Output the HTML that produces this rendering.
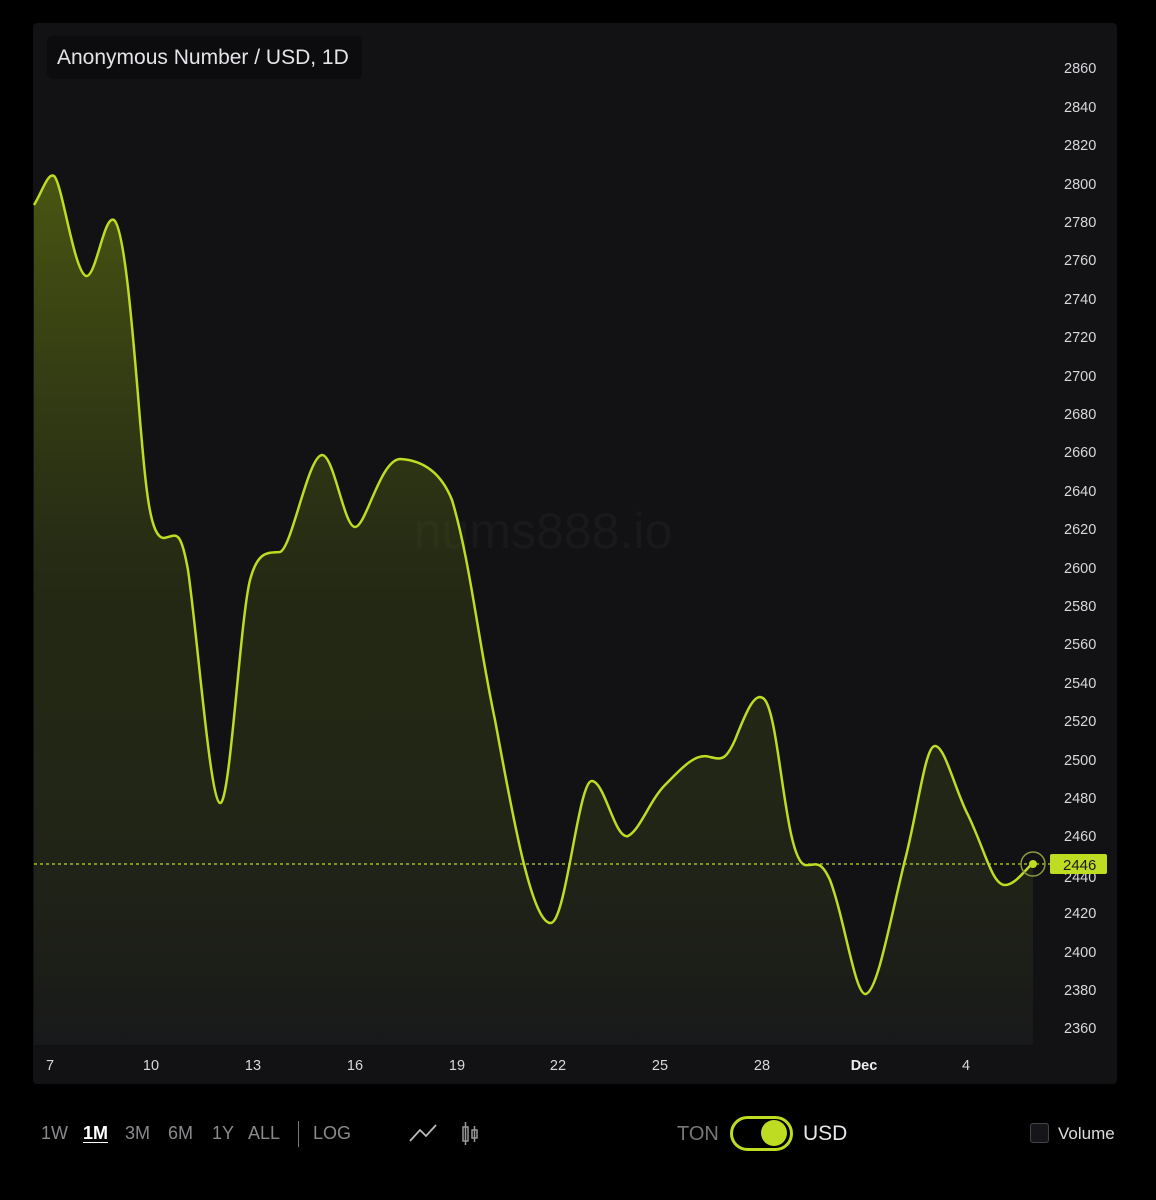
<!DOCTYPE html>
<html><head><meta charset="utf-8"><style>
body{margin:0;background:#000;width:1156px;height:1200px;position:relative;font-family:"Liberation Sans",sans-serif;overflow:hidden}
.panel{position:absolute;left:33px;top:23px;width:1084px;height:1061px;background:#121214;border-radius:4px}
.t{position:absolute;color:#d6d6da;font-size:14.5px}
.y{position:absolute;left:1064px;color:#d8d8dc;font-size:14.5px}
.x{position:absolute;top:1058px;color:#d8d8dc;font-size:14.5px;transform:translateX(-50%)}
.b{position:absolute;top:1123px;font-size:18px;color:#8a8a8e}
</style></head><body>
<div class="panel"></div>
<div style="position:absolute;left:47px;top:36px;width:315px;height:43px;background:#0c0c0e;border-radius:6px"></div>
<div class="t" style="left:57px;top:46px;font-size:21px;color:#e4e4e8">Anonymous Number / USD, 1D</div>
<svg style="position:absolute;left:0;top:0" width="1156" height="1200">
<defs><linearGradient id="g" x1="0" y1="0" x2="0" y2="1"><stop offset="0" stop-color="#7f9a10" stop-opacity=".5"/><stop offset=".5" stop-color="#4a5a14" stop-opacity=".3"/><stop offset="1" stop-color="#1c1d1e" stop-opacity=".6"/></linearGradient></defs>
<text x="543" y="548" text-anchor="middle" font-family="Liberation Sans" font-size="50" fill="#ffffff" fill-opacity=".03">nums888.io</text>
<path d="M34,205 C42,192 48,172 54,176 C62,182 74,272 86,276 C96,278 104,214 114,220 C124,228 132,320 140,420 C146,490 150,538 164,538 C176,536 180,526 188,570 C198,640 210,800 220,803 C230,806 240,620 250,580 C258,550 268,553 280,552 C292,548 308,456 322,455 C334,455 344,527 355,527 C366,527 380,460 400,459 C420,460 440,470 452,500 C470,560 478,640 495,720 C510,800 530,920 550,923 C566,926 578,780 592,781 C605,782 615,840 628,836 C640,830 650,800 665,785 C680,770 695,752 710,757 C722,760 726,760 735,740 C745,715 755,688 765,700 C780,720 785,860 805,865 C815,866 820,858 830,880 C845,920 855,996 866,994 C878,990 890,920 905,860 C918,810 925,746 935,746 C945,746 955,790 968,815 C985,850 992,885 1005,885 C1015,885 1025,870 1033,863 L1033,1045 L34,1045 Z" fill="url(#g)"/>
<path d="M34,205 C42,192 48,172 54,176 C62,182 74,272 86,276 C96,278 104,214 114,220 C124,228 132,320 140,420 C146,490 150,538 164,538 C176,536 180,526 188,570 C198,640 210,800 220,803 C230,806 240,620 250,580 C258,550 268,553 280,552 C292,548 308,456 322,455 C334,455 344,527 355,527 C366,527 380,460 400,459 C420,460 440,470 452,500 C470,560 478,640 495,720 C510,800 530,920 550,923 C566,926 578,780 592,781 C605,782 615,840 628,836 C640,830 650,800 665,785 C680,770 695,752 710,757 C722,760 726,760 735,740 C745,715 755,688 765,700 C780,720 785,860 805,865 C815,866 820,858 830,880 C845,920 855,996 866,994 C878,990 890,920 905,860 C918,810 925,746 935,746 C945,746 955,790 968,815 C985,850 992,885 1005,885 C1015,885 1025,870 1033,863" fill="none" stroke="#bddc22" stroke-width="2.5"/>
<line x1="34" y1="864" x2="1050" y2="864" stroke="#bddc22" stroke-width="1.2" stroke-dasharray="3,3"/>
<text x="1064" y="882" font-family="Liberation Sans" font-size="14.5" fill="#d8d8dc">2440</text>
<circle cx="1033" cy="864" r="12" fill="none" stroke="#8a9a40" stroke-width="1.5"/>
<circle cx="1033" cy="864" r="4" fill="#bddc22"/>
<rect x="1050" y="854" width="57" height="20" rx="2" fill="#bddc22"/>
<text x="1063" y="870" font-family="Liberation Sans" font-size="15" fill="#1a1a1a">2446</text>
<polyline points="410,1141 420,1130 426,1136 436,1125" fill="none" stroke="#bbb" stroke-width="1.8"/>
<rect x="463" y="1127" width="5" height="14" fill="none" stroke="#999" stroke-width="1.5"/>
<line x1="465.5" y1="1122" x2="465.5" y2="1145" stroke="#999" stroke-width="1.5"/>
<rect x="472" y="1130" width="5" height="8" fill="none" stroke="#999" stroke-width="1.5"/>
<line x1="474.5" y1="1126" x2="474.5" y2="1142" stroke="#999" stroke-width="1.5"/>
</svg>
<div class="y" style="top:61px">2860</div><div class="y" style="top:100px">2840</div><div class="y" style="top:138px">2820</div><div class="y" style="top:177px">2800</div><div class="y" style="top:215px">2780</div><div class="y" style="top:253px">2760</div><div class="y" style="top:292px">2740</div><div class="y" style="top:330px">2720</div><div class="y" style="top:369px">2700</div><div class="y" style="top:407px">2680</div><div class="y" style="top:445px">2660</div><div class="y" style="top:484px">2640</div><div class="y" style="top:522px">2620</div><div class="y" style="top:561px">2600</div><div class="y" style="top:599px">2580</div><div class="y" style="top:637px">2560</div><div class="y" style="top:676px">2540</div><div class="y" style="top:714px">2520</div><div class="y" style="top:753px">2500</div><div class="y" style="top:791px">2480</div><div class="y" style="top:829px">2460</div><div class="y" style="top:906px">2420</div><div class="y" style="top:945px">2400</div><div class="y" style="top:983px">2380</div><div class="y" style="top:1021px">2360</div>
<div class="x" style="left:50px">7</div><div class="x" style="left:151px">10</div><div class="x" style="left:253px">13</div><div class="x" style="left:355px">16</div><div class="x" style="left:457px">19</div><div class="x" style="left:558px">22</div><div class="x" style="left:660px">25</div><div class="x" style="left:762px">28</div><div class="x" style="left:864px;font-weight:bold;color:#eee">Dec</div><div class="x" style="left:966px">4</div>
<div class="b" style="left:41px">1W</div>
<div class="b" style="left:83px;color:#fff;font-weight:bold;text-decoration:underline;text-underline-offset:3px">1M</div>
<div class="b" style="left:125px">3M</div><div class="b" style="left:168px">6M</div><div class="b" style="left:212px">1Y</div><div class="b" style="left:248px">ALL</div>
<div style="position:absolute;left:298px;top:1121px;width:1px;height:26px;background:#777"></div>
<div class="b" style="left:313px">LOG</div>
<div class="b" style="left:677px;top:1123px;font-size:20px;color:#777">TON</div>
<div style="position:absolute;left:730px;top:1116px;width:63px;height:35px;border:3px solid #bddc22;border-radius:18px;box-sizing:border-box"></div>
<div style="position:absolute;left:761px;top:1120px;width:26px;height:26px;border-radius:50%;background:#bddc22"></div>
<div class="b" style="left:803px;top:1122px;font-size:21px;color:#e8e8ec">USD</div>
<div style="position:absolute;left:1030px;top:1123px;width:19px;height:20px;border:1.5px solid #444;border-radius:3px;background:#15151a;box-sizing:border-box"></div>
<div class="b" style="left:1058px;top:1124px;font-size:17px;color:#ddd">Volume</div>
</body></html>
